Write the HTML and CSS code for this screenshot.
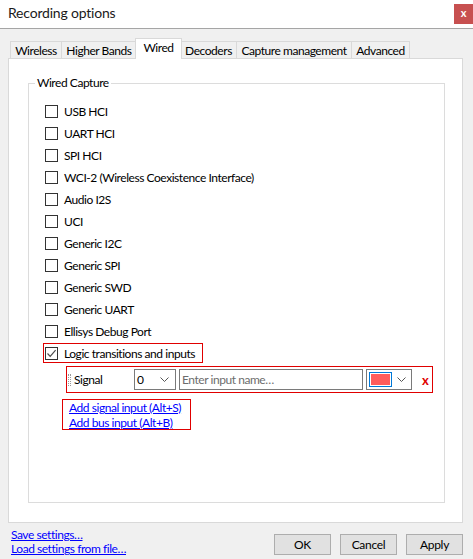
FILE: index.html
```html
<!DOCTYPE html>
<html>
<head>
<meta charset="utf-8">
<title>Recording options</title>
<link rel="stylesheet" href="styles.css">
</head>
<body>
<div class="window">
  <header class="titlebar">
    <span class="title">Recording options</span>
    <span class="close">x</span>
  </header>

  <div class="content">
    <nav class="tabs">
      <span class="tab">Wireless</span>
      <span class="tab">Higher Bands</span>
      <span class="tab active">Wired</span>
      <span class="tab">Decoders</span>
      <span class="tab">Capture management</span>
      <span class="tab">Advanced</span>
    </nav>

    <section class="panel">
      <fieldset class="group">
        <legend>Wired Capture</legend>
        <ul class="checks">
          <li><span class="box"></span>USB HCI</li>
          <li><span class="box"></span>UART HCI</li>
          <li><span class="box"></span>SPI HCI</li>
          <li><span class="box"></span>WCI-2 (Wireless Coexistence Interface)</li>
          <li><span class="box"></span>Audio I2S</li>
          <li><span class="box"></span>UCI</li>
          <li><span class="box"></span>Generic I2C</li>
          <li><span class="box"></span>Generic SPI</li>
          <li><span class="box"></span>Generic SWD</li>
          <li><span class="box"></span>Generic UART</li>
          <li><span class="box"></span>Ellisys Debug Port</li>
          <li><span class="mark"><span class="box checked">
            <svg width="11" height="11" viewBox="0 0 11 11"><path d="M1.5 5.5 L4.2 8.3 L9.6 2.2" fill="none" stroke="#4d4d4d" stroke-width="1.2"/></svg>
          </span>Logic transitions and inputs</span></li>
        </ul>

        <div class="signal-row">
          <span class="grip"></span>
          <span class="signal-label">Signal</span>
          <span class="combo num">0<svg class="chev" width="9" height="5" viewBox="0 0 9 5"><path d="M0.5 0.5 L4.5 4.5 L8.5 0.5" fill="none" stroke="#555" stroke-width="1"/></svg></span>
          <span class="name-input">Enter input name…</span>
          <span class="combo color"><span class="swatch"><span class="swatch-fill"></span></span><svg class="chev" width="9" height="5" viewBox="0 0 9 5"><path d="M0.5 0.5 L4.5 4.5 L8.5 0.5" fill="none" stroke="#555" stroke-width="1"/></svg></span>
          <span class="remove">x</span>
        </div>

        <div class="add-links">
          <a href="#">Add signal input (Alt+S)</a>
          <a href="#">Add bus input (Alt+B)</a>
        </div>
      </fieldset>
    </section>

    <footer class="footer">
      <div class="file-links">
        <a href="#">Save settings…</a>
        <a href="#">Load settings from file…</a>
      </div>
      <div class="buttons">
        <button>OK</button>
        <button>Cancel</button>
        <button>Apply</button>
      </div>
    </footer>
  </div>
</div>
</body>
</html>
```

FILE: styles.css
```css
* { box-sizing: border-box; }

html, body {
  margin: 0;
  padding: 0;
}

body {
  width: 473px;
  height: 559px;
  overflow: hidden;
  background: #f0f0f0;
  font-family: Lato, "Open Sans", sans-serif;
  font-size: 12px;
  letter-spacing: -0.45px;
  color: #000;
}

/* title bar */
.titlebar {
  height: 29px;
  background: #fff;
  border-bottom: 1px solid #a5a5a5;
  display: flex;
  align-items: flex-start;
}

.title {
  font-size: 14px;
  letter-spacing: -0.2px;
  margin: 4px 0 0 8px;
  line-height: 18px;
  color: #1a1a1a;
}

.close {
  margin-left: auto;
  margin-top: 4px;
  width: 19px;
  height: 20px;
  background: #c75050;
  color: #fff;
  font-weight: bold;
  font-size: 11px;
  line-height: 18px;
  text-align: center;
  letter-spacing: 0;
}

.content {
  padding: 9px 10px 0 8px;
}

/* tab strip */
.tabs {
  display: flex;
  align-items: flex-end;
  height: 20px;
  padding-left: 2px;
}

.tab {
  flex: none;
  height: 17px;
  line-height: 17px;
  padding: 0;
  text-align: center;
  border: 1px solid #d9d9d9;
  border-bottom: none;
  margin-right: -1px;
  background: #f0f0f0;
  white-space: nowrap;
}

.tab:nth-child(1) { width: 52px; }
.tab:nth-child(2) { width: 76px; }
.tab:nth-child(4) { width: 57px; }
.tab:nth-child(5) { width: 116px; }
.tab:nth-child(6) { width: 59px; }

.tab.active {
  position: relative;
  z-index: 1;
  width: 47px;
  height: 21px;
  margin: 0 -2px -1px -1px;
  line-height: 17px;
  background: #fff;
}

/* tab page */
.panel {
  height: 465px;
  background: #fff;
  border: 1px solid #d9d9d9;
  display: flex;
  flex-direction: column;
}

.group {
  flex: 1;
  margin: 16px 17px 19px 19px;
  padding: 9px 0 0 6px;
  border: 1px solid #dcdcdc;
  min-width: 0;
}

.group legend {
  padding: 0 2px;
  line-height: 16px;
}

.checks {
  list-style: none;
  margin: 0;
  padding: 0 0 0 10px;
}

.checks li {
  height: 22px;
  display: flex;
  align-items: center;
  gap: 6px;
}

.box {
  width: 13px;
  height: 13px;
  border: 1px solid #333;
  background: #fff;
  flex: none;
  display: flex;
  align-items: center;
  justify-content: center;
}

.mark {
  display: flex;
  align-items: center;
  gap: 6px;
  border: 1px solid #e00000;
  height: 20px;
  padding: 0 7px 0 1px;
  margin-left: -2px;
}

/* signal input editor */
.signal-row {
  display: flex;
  align-items: center;
  height: 27px;
  margin: 2px 0 0 31px;
  width: 367px;
  border: 1px solid #e00000;
  padding-left: 1px;
}

.grip {
  width: 3px;
  height: 12px;
  border-left: 1px dotted #999;
  border-right: 1px dotted #999;
  margin-right: 3px;
}

.signal-label {
  width: 60px;
}

.combo {
  display: flex;
  align-items: center;
  height: 21px;
  border: 1px solid #7a7a7a;
  background: #fff;
}

.combo.num {
  width: 42px;
  padding-left: 2px;
  justify-content: space-between;
  padding-right: 6px;
}

.chev { flex: none; }

.name-input {
  width: 184px;
  height: 21px;
  margin-left: 3px;
  border: 1px solid #7a7a7a;
  padding-left: 2px;
  line-height: 19px;
  color: #6d6d6d;
}

.combo.color {
  width: 46px;
  margin-left: 3px;
  padding: 0 5px 0 2px;
  justify-content: space-between;
}

.swatch {
  width: 23px;
  height: 15px;
  border: 1px solid #0078d7;
  padding: 1px;
}

.swatch-fill {
  display: block;
  width: 100%;
  height: 100%;
  background: #ff5c5c;
}

.remove {
  margin-left: 10px;
  color: #e00000;
  font-weight: bold;
  font-size: 13px;
}

.add-links {
  display: flex;
  flex-direction: column;
  width: 129px;
  margin: 6px 0 0 27px;
  padding: 0 0 0 6px;
  border: 1px solid #e00000;
  line-height: 15px;
  height: 31px;
}

a {
  color: #0000ff;
  text-decoration: underline;
  white-space: nowrap;
}

/* bottom bar */
.footer {
  display: flex;
  justify-content: space-between;
  padding: 5px 0 0 3px;
}

.file-links {
  display: flex;
  flex-direction: column;
  line-height: 14px;
}

.buttons {
  display: flex;
  gap: 9px;
  padding-top: 6px;
}

button {
  width: 57px;
  height: 21px;
  background: #e1e1e1;
  border: 1px solid #adadad;
  font: inherit;
  letter-spacing: -0.3px;
  color: #000;
  padding: 0;
}
```
